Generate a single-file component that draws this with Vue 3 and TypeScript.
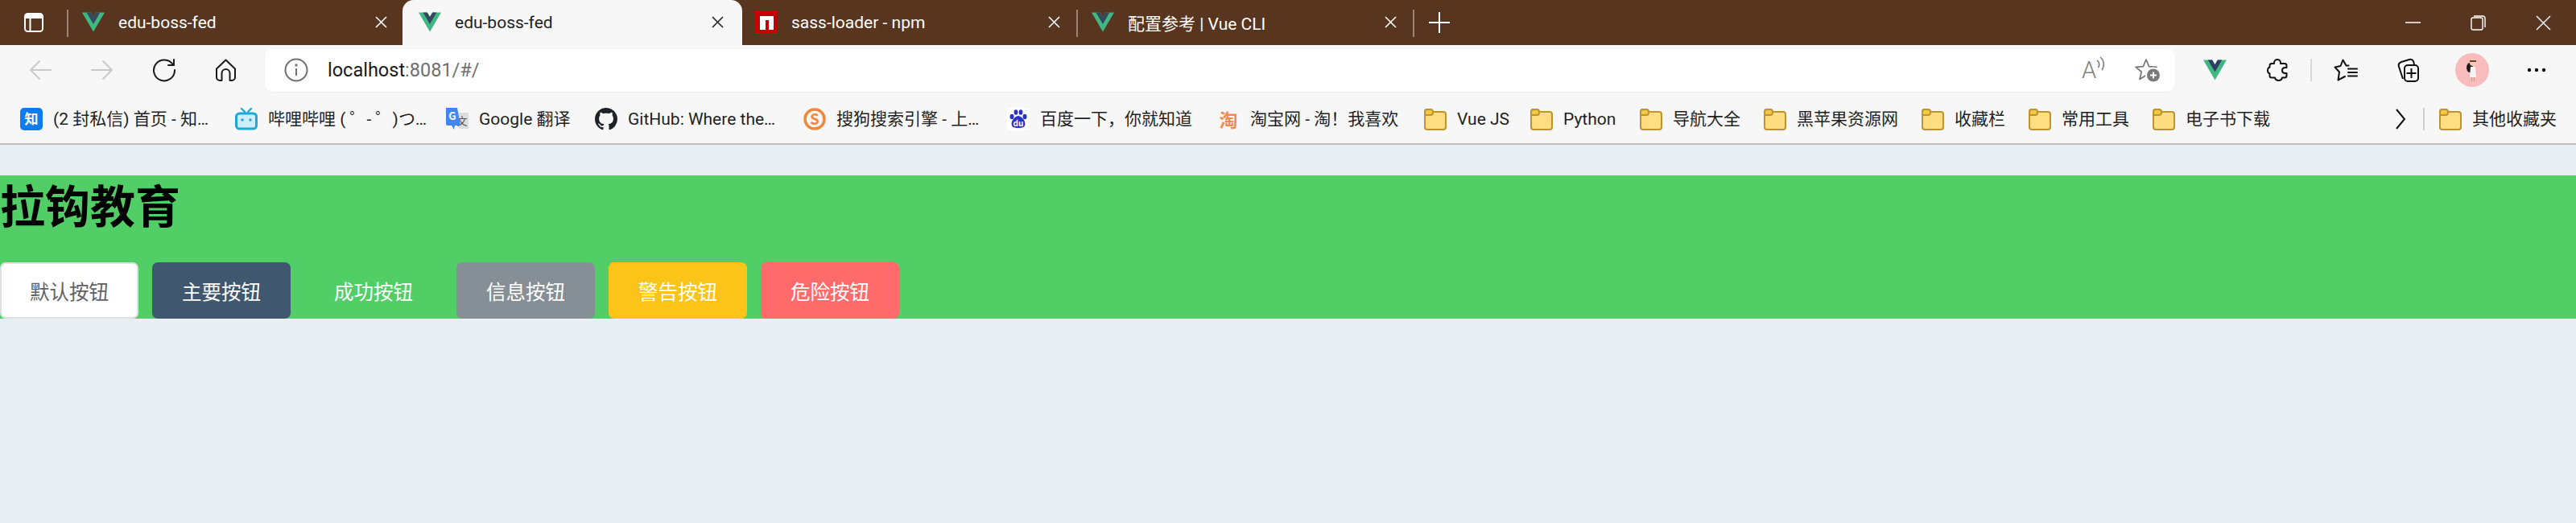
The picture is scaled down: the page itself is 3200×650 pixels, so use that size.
<script setup lang="ts">
interface Bookmark {
  title: string
  icon: string
  width: number
}

const bookmarks: Bookmark[] = [
  { title: '(2 封私信) 首页 - 知…', icon: 'zhihu', width: 267 },
  { title: '哔哩哔哩 ( ゜- ゜)つ…', icon: 'bili', width: 262 },
  { title: 'Google 翻译', icon: 'google', width: 185 },
  { title: 'GitHub: Where the…', icon: 'github', width: 259 },
  { title: '搜狗搜索引擎 - 上…', icon: 'sogou', width: 253 },
  { title: '百度一下，你就知道', icon: 'baidu', width: 261 },
  { title: '淘宝网 - 淘！我喜欢', icon: 'tao', width: 257 },
  { title: 'Vue JS', icon: 'folder', width: 132 },
  { title: 'Python', icon: 'folder', width: 136 },
  { title: '导航大全', icon: 'folder', width: 154 },
  { title: '黑苹果资源网', icon: 'folder', width: 196 },
  { title: '收藏栏', icon: 'folder', width: 133 },
  { title: '常用工具', icon: 'folder', width: 154 },
  { title: '电子书下载', icon: 'folder', width: 160 }
]

const buttons = [
  { label: '默认按钮', type: 'default' },
  { label: '主要按钮', type: 'primary' },
  { label: '成功按钮', type: 'success' },
  { label: '信息按钮', type: 'info' },
  { label: '警告按钮', type: 'warning' },
  { label: '危险按钮', type: 'danger' }
]

const tabs = [
  { title: 'edu-boss-fed', icon: 'vue', active: false, sep: true },
  { title: 'edu-boss-fed', icon: 'vue', active: true, sep: false },
  { title: 'sass-loader - npm', icon: 'npm', active: false, sep: false },
  { title: '配置参考 | Vue CLI', icon: 'vue', active: false, sep: true }
]
</script>

<template>
  <div class="browser">
    <header class="tabbar">
      <div class="side-btn">
        <svg width="24" height="24" viewBox="0 0 24 24">
          <rect x="1" y="1" width="22" height="22" rx="3.5" fill="none" stroke="#fff" stroke-width="2" />
          <path d="M1 7V4.5A3.5 3.5 0 0 1 4.500 1h15A3.500 3.500 0 0 1 23 4.500V7Z" fill="#fff" />
          <path d="M7.500 7v16" stroke="#fff" stroke-width="2" />
        </svg>
      </div>
      <div
        v-for="(tab, i) in tabs"
        :key="i"
        class="tab"
        :class="{ active: tab.active, sep: tab.sep }"
      >
        <svg v-if="tab.icon === 'vue'" class="tab-icon" width="28" height="25" viewBox="0 0 256 221">
          <path d="M204.800 0H256L128 220.800 0 0h97.920L128 51.200 157.440 0h47.360Z" fill="#41b883" />
          <path d="M50.560 0 128 133.120 204.800 0h-47.360L128 51.200 97.920 0H50.560Z" fill="#35495e" />
        </svg>
        <svg v-else class="tab-icon" width="28" height="28" viewBox="0 0 28 28">
          <rect width="28" height="28" fill="#c60000" />
          <path d="M6 6h17v17h-6V11h-4v12H6Z" fill="#fff" />
        </svg>
        <span class="tab-title">{{ tab.title }}</span>
        <svg class="tab-close" width="15" height="15" viewBox="0 0 15 15">
          <path d="M1 1l13 13M14 1 1 14" stroke="currentColor" stroke-width="1.600" />
        </svg>
      </div>
      <div class="new-tab">
        <svg width="26" height="26" viewBox="0 0 26 26">
          <path d="M13 0v26M0 13h26" stroke="#fff" stroke-width="2" />
        </svg>
      </div>
      <div class="win-controls">
        <div class="win-btn">
          <svg width="19" height="2" viewBox="0 0 19 2"><path d="M0 1h19" stroke="#fff" stroke-width="1.500" /></svg>
        </div>
        <div class="win-btn">
          <svg width="19" height="19" viewBox="0 0 19 19" fill="none" stroke="#fff" stroke-width="1.400">
            <rect x="1" y="3" width="14" height="15" rx="2" />
            <path d="M4 1h11a3 3 0 0 1 3 3v11" />
          </svg>
        </div>
        <div class="win-btn">
          <svg width="19" height="19" viewBox="0 0 19 19"><path d="M1 1l17 17M18 1 1 18" stroke="#fff" stroke-width="1.400" /></svg>
        </div>
      </div>
    </header>

    <div class="toolbar">
      <div class="tool-btn">
        <svg width="28" height="26" viewBox="0 0 28 26" fill="none" stroke="#c9c9c9" stroke-width="2" stroke-linecap="round" stroke-linejoin="round">
          <path d="M27 13H2M13 2 2 13l11 11" />
        </svg>
      </div>
      <div class="tool-btn">
        <svg width="28" height="26" viewBox="0 0 28 26" fill="none" stroke="#c9c9c9" stroke-width="2" stroke-linecap="round" stroke-linejoin="round">
          <path d="M1 13h25M15 2l11 11-11 11" />
        </svg>
      </div>
      <div class="tool-btn">
        <svg width="30" height="30" viewBox="0 0 30 30" fill="none" stroke="#1a1a1a" stroke-width="2" stroke-linecap="round" stroke-linejoin="round">
          <path d="M26 8.500A13 13 0 1 0 28 15" />
          <path d="M27 2v7h-7" />
        </svg>
      </div>
      <div class="tool-btn">
        <svg width="27" height="28" viewBox="0 0 27 28" fill="none" stroke="#1a1a1a" stroke-width="2" stroke-linejoin="round">
          <path d="M2 12.500 13.500 1.500 25 12.500V23a4 4 0 0 1-4 4h-2.500V18a5 5 0 0 0-10 0v9H6a4 4 0 0 1-4-4Z" />
        </svg>
      </div>

      <div class="address">
        <svg class="info-icon" width="30" height="30" viewBox="0 0 30 30" fill="none" stroke="#707070" stroke-width="2">
          <circle cx="15" cy="15" r="13.500" />
          <path d="M15 13v9" />
          <circle cx="15" cy="9" r=".7" />
        </svg>
        <span class="url"><span class="host">localhost</span>:8081/#/</span>
        <div class="addr-right">
          <div class="read-icon">
            <span class="read-a">A</span>
            <svg width="12" height="18" viewBox="0 0 12 18">
              <path d="M1 5c3 2 3.500 6 1.500 9M5 1c5 4 5.500 11 2 16" fill="none" stroke="#808080" stroke-width="1.600" />
            </svg>
          </div>
          <svg width="32" height="30" viewBox="0 0 32 30">
            <path d="M14 2l3.600 8.600 9.400.7-7.200 6 2.200 9.200-8-4.900-8 4.900 2.200-9.200L1 11.300l9.400-.7Z" fill="none" stroke="#7a7a7a" stroke-width="1.800" stroke-linejoin="round" />
            <circle cx="23" cy="21.500" r="10" fill="#fff" />
            <circle cx="23" cy="21.500" r="8" fill="#7a7a7a" />
            <path d="M23 17.500v8M19 21.500h8" stroke="#fff" stroke-width="2" />
          </svg>
        </div>
      </div>

      <div class="tool-btn first-ext">
        <svg width="29" height="26" viewBox="0 0 256 221">
          <path d="M204.800 0H256L128 220.800 0 0h97.920L128 51.200 157.440 0h47.360Z" fill="#41b883" />
          <path d="M50.560 0 128 133.120 204.800 0h-47.360L128 51.200 97.920 0H50.560Z" fill="#2f3f5c" />
        </svg>
      </div>
      <div class="tool-btn">
        <svg width="26" height="28" viewBox="0 0 26 28" fill="none" stroke="#111" stroke-width="2" stroke-linejoin="round">
          <path d="M9 5C9 2.500 11 1 13 1s4 1.500 4 4v1h5c1.500 0 2.500 1 2.500 2.500V11H23c-2.500 0-4 1.500-4 3.500s1.500 3.500 4 3.500h1.500v3c0 1.500-1 2.500-2.500 2.500h-3c-.5 2.300-2.500 3.500-4.500 3.500s-4-1.200-4.500-3.500H6c-1.500 0-2.500-1-2.500-2.500v-2.500C2 18 1 16.300 1 14.500S2 11 3.500 10.500v-2C3.500 7 4.500 6 6 6h3Z" />
        </svg>
      </div>
      <div class="tool-sep"></div>
      <div class="tool-btn">
        <svg width="30" height="28" viewBox="0 0 30 28" fill="none" stroke="#111" stroke-width="2" stroke-linejoin="round" stroke-linecap="round">
          <path d="M18.500 8.500H15.500L11.500 1.500 8.500 9 1.500 10.500 7 16.500 5.500 26.500 14 22" />
          <path d="M18 12.500h11M18 17h11M18 21.500h11" />
        </svg>
      </div>
      <div class="tool-btn">
        <svg width="28" height="30" viewBox="0 0 28 30" fill="none" stroke="#111" stroke-width="2" stroke-linejoin="round">
          <path d="M8 26 3 11C2 8 3 6 6 5l10-3c2-.5 4 .2 5 2l1 4" />
          <rect x="10" y="9" width="17" height="20" rx="4" />
          <path d="M18.500 13v12M12.500 19h12" />
        </svg>
      </div>
      <div class="tool-btn avatar-btn">
        <svg width="42" height="42" viewBox="0 0 42 42">
          <circle cx="21" cy="21" r="21" fill="#f8bcbc" />
          <ellipse cx="18" cy="18" rx="4" ry="6" fill="#1d1d1d" />
          <circle cx="22" cy="12" r="4" fill="#f1cdb8" />
          <path d="M18 9h8v2h-8Z" fill="#7a3a2a" />
          <path d="M19 17h6l1 13h-8Z" fill="#f4f4f4" />
          <path d="M20 30h1v5h-1ZM23 30h1v5h-1Z" fill="#b89a9a" />
        </svg>
      </div>
      <div class="tool-btn">
        <svg width="24" height="6" viewBox="0 0 24 6" fill="#111">
          <circle cx="3" cy="3" r="2.200" />
          <circle cx="12" cy="3" r="2.200" />
          <circle cx="21" cy="3" r="2.200" />
        </svg>
      </div>
    </div>

    <nav class="bookmarks">
      <a
        v-for="b in bookmarks"
        :key="b.title"
        class="bookmark"
        :style="{ width: b.width + 'px' }"
      >
        <svg v-if="b.icon === 'zhihu'" class="bm-icon" width="28" height="28" viewBox="0 0 28 28">
          <rect width="28" height="28" rx="5" fill="#0f7bf0" />
          <text x="14" y="20" text-anchor="middle" class="icon-text zhi">知</text>
        </svg>
        <svg v-else-if="b.icon === 'bili'" class="bm-icon" width="28" height="28" viewBox="0 0 28 28">
          <path d="M8 1l4 4M20 1l-4 4" stroke="#1aa9d8" stroke-width="2.400" stroke-linecap="round" />
          <rect x="1.500" y="7" width="25" height="19" rx="4" fill="#cfeef7" stroke="#1aa9d8" stroke-width="3" />
          <circle cx="9" cy="15" r="1.700" fill="#1aa9d8" />
          <circle cx="19" cy="15" r="1.700" fill="#1aa9d8" />
        </svg>
        <svg v-else-if="b.icon === 'google'" class="bm-icon" width="28" height="28" viewBox="0 0 28 28">
          <path d="M12 6h16v20H16Z" fill="#dddddd" />
          <text x="20" y="21" text-anchor="middle" class="icon-text wen">文</text>
          <path d="M0 0h14l4 22h-7l-1 5-3-5H2a2 2 0 0 1-2-2Z" fill="#4285f4" />
          <text x="8" y="15" text-anchor="middle" class="icon-text gee">G</text>
        </svg>
        <svg v-else-if="b.icon === 'github'" class="bm-icon" width="28" height="28" viewBox="0 0 16 16">
          <path fill="#1f2328" d="M8 0C3.580 0 0 3.580 0 8c0 3.540 2.290 6.530 5.470 7.590.4.070.55-.17.55-.38 0-.19-.01-.82-.01-1.490-2.010.37-2.530-.49-2.690-.94-.09-.23-.48-.94-.82-1.130-.28-.15-.68-.52-.01-.53.63-.01 1.080.58 1.230.82.72 1.210 1.870.87 2.330.66.07-.52.28-.87.51-1.070-1.780-.2-3.640-.89-3.640-3.950 0-.87.31-1.590.82-2.150-.08-.2-.36-1.020.08-2.120 0 0 .67-.21 2.200.82.64-.18 1.320-.27 2-.27.68 0 1.360.09 2 .27 1.530-1.040 2.200-.82 2.200-.82.44 1.100.16 1.920.08 2.120.51.56.82 1.270.82 2.150 0 3.070-1.870 3.750-3.650 3.950.29.25.54.73.54 1.480 0 1.070-.01 1.930-.01 2.200 0 .21.15.46.55.38A8.013 8.013 0 0 0 16 8c0-4.420-3.580-8-8-8z" />
        </svg>
        <svg v-else-if="b.icon === 'sogou'" class="bm-icon" width="28" height="28" viewBox="0 0 28 28">
          <circle cx="14" cy="14" r="12" fill="none" stroke="#ee8a3c" stroke-width="3.500" />
          <text x="14" y="20.500" text-anchor="middle" class="icon-text sou">S</text>
        </svg>
        <svg v-else-if="b.icon === 'baidu'" class="bm-icon" width="28" height="28" viewBox="0 0 28 28">
          <rect width="28" height="28" rx="2" fill="#fff" />
          <g fill="#2932c4">
            <ellipse cx="6" cy="11" rx="2.500" ry="3.200" />
            <ellipse cx="11" cy="5.500" rx="2.400" ry="3.200" />
            <ellipse cx="17" cy="5.500" rx="2.400" ry="3.200" />
            <ellipse cx="22" cy="11" rx="2.500" ry="3.200" />
            <path d="M14 10c4 0 10 7 8 12-1 3-5 3-8 3s-7 0-8-3c-2-5 4-12 8-12Z" />
          </g>
          <text x="14" y="23" text-anchor="middle" class="icon-text du">du</text>
        </svg>
        <span v-else-if="b.icon === 'tao'" class="bm-icon tao-icon">淘</span>
        <svg v-else class="bm-icon" width="28" height="28" viewBox="0 0 28 28">
          <path d="M1 5a3 3 0 0 1 3-3h4.500l3 3H24a3 3 0 0 1 3 3v16a3 3 0 0 1-3 3H4a3 3 0 0 1-3-3Z" fill="#ffdd80" stroke="#bd9530" stroke-width="2" />
          <path d="M1 9V5a3 3 0 0 1 3-3h4a3 3 0 0 1 3 3v1a3 3 0 0 1-3 3Z" fill="#f5c842" stroke="#bd9530" stroke-width="2" />
        </svg>
        <span class="bm-title">{{ b.title }}</span>
      </a>
      <div class="bm-right">
        <svg width="14" height="28" viewBox="0 0 14 28">
          <path d="M2 2l10 12L2 26" fill="none" stroke="#111" stroke-width="2" />
        </svg>
        <div class="bm-sep"></div>
        <a class="bookmark other">
          <svg class="bm-icon" width="28" height="28" viewBox="0 0 28 28">
            <path d="M1 5a3 3 0 0 1 3-3h4.500l3 3H24a3 3 0 0 1 3 3v16a3 3 0 0 1-3 3H4a3 3 0 0 1-3-3Z" fill="#ffdd80" stroke="#bd9530" stroke-width="2" />
            <path d="M1 9V5a3 3 0 0 1 3-3h4a3 3 0 0 1 3 3v1a3 3 0 0 1-3 3Z" fill="#f5c842" stroke="#bd9530" stroke-width="2" />
          </svg>
          <span class="bm-title">其他收藏夹</span>
        </a>
      </div>
    </nav>

    <main class="page">
      <section class="hero">
        <h1>拉钩教育</h1>
        <div class="btn-row">
          <button v-for="b in buttons" :key="b.type" class="btn" :class="b.type">{{ b.label }}</button>
        </div>
      </section>
    </main>
  </div>
</template>

<style scoped>
.browser {
  display: flex;
  flex-direction: column;
  height: 650px;
  overflow: hidden;
  font-family: Roboto, "Noto Sans CJK SC", sans-serif;
}

.tabbar {
  display: flex;
  align-items: stretch;
  height: 56px;
  background: #57351f;
  color: #fff;
}

.side-btn {
  display: flex;
  align-items: center;
  width: 83px;
  padding-left: 30px;
  box-sizing: border-box;
}

.tab {
  position: relative;
  display: flex;
  align-items: center;
  width: 418px;
  flex: none;
  padding: 0 20px 1px 19px;
  box-sizing: border-box;
  font-size: 21px;
}

.tab.sep::before {
  content: "";
  position: absolute;
  left: 0;
  top: 12px;
  bottom: 10px;
  width: 2px;
  background: #9c8374;
}

.tab.active {
  background: #f7f7f7;
  color: #222;
  border-radius: 14px 14px 0 0;
  width: 422px;
  margin: 0 -3px 0 -1px;
  padding-left: 20px;
  padding-right: 23px;
  z-index: 1;
}

.tab-icon {
  flex: none;
}

.tab-title {
  flex: 1;
  margin-left: 17px;
  white-space: nowrap;
}

.tab-close {
  flex: none;
}

.new-tab {
  position: relative;
  display: flex;
  align-items: center;
  justify-content: center;
  width: 62px;
  border-left: 2px solid transparent;
}

.new-tab::before {
  content: "";
  position: absolute;
  left: -2px;
  top: 12px;
  bottom: 10px;
  width: 2px;
  background: #9c8374;
}

.win-controls {
  display: flex;
  margin-left: auto;
}

.win-btn {
  display: flex;
  align-items: center;
  justify-content: center;
  width: 81px;
}

.toolbar {
  display: flex;
  align-items: center;
  height: 62px;
  padding: 0 11px;
  background: #f7f7f7;
  box-sizing: border-box;
}

.tool-btn {
  display: flex;
  align-items: center;
  justify-content: center;
  width: 77px;
  height: 54px;
  flex: none;
}

.first-ext {
  margin-left: 11px;
}

.avatar-btn {
  margin-left: 3px;
  margin-right: 3px;
}

.tool-sep {
  width: 2px;
  height: 28px;
  margin: 0 3px;
  flex: none;
  background: #d8d8d8;
}

.address {
  display: flex;
  align-items: center;
  flex: 1;
  height: 53px;
  margin-left: 10px;
  padding: 0 18px 0 24px;
  background: #fff;
  border-radius: 9px;
  box-shadow: 0 1px 2px rgba(0, 0, 0, 0.06);
}

.info-icon {
  flex: none;
}

.url {
  margin-left: 24px;
  font-size: 23.500px;
  color: #6f6f6f;
}

.host {
  color: #1a1a1a;
}

.addr-right {
  display: flex;
  align-items: center;
  gap: 34px;
  margin-left: auto;
}

.read-icon {
  display: flex;
  align-items: flex-start;
  width: 32px;
  height: 34px;
}

.read-a {
  font-size: 29px;
  font-weight: 300;
  line-height: 34px;
  color: #808080;
}

.bookmarks {
  display: flex;
  align-items: center;
  height: 62px;
  padding: 0 0 1px 25px;
  background: #f7f7f7;
  border-bottom: 2px solid #bdbdbd;
  box-sizing: border-box;
}

.bookmark {
  display: flex;
  align-items: center;
  flex: none;
  gap: 13px;
  white-space: nowrap;
  color: #1f1f1f;
}

.bm-icon {
  flex: none;
}

.tao-icon {
  width: 28px;
  font-family: "Noto Sans CJK SC", sans-serif;
  font-size: 23px;
  font-weight: 700;
  line-height: 28px;
  text-align: center;
  color: #f08a50;
}

.bm-title {
  font-size: 21px;
  line-height: 28px;
}

.bm-right {
  display: flex;
  align-items: center;
  margin-left: auto;
  padding-right: 24px;
}

.bm-sep {
  width: 2px;
  height: 28px;
  margin: 0 18px 0 21px;
  background: #d0d0d0;
}

.icon-text {
  font-family: "Noto Sans CJK SC", sans-serif;
}

.zhi {
  font-size: 17px;
  font-weight: 700;
  fill: #fff;
}

.wen {
  font-size: 13px;
  fill: #555;
}

.gee {
  font-size: 13px;
  font-weight: 700;
  fill: #fff;
}

.sou {
  font-size: 19px;
  font-weight: 700;
  fill: #ee8a3c;
}

.du {
  font-size: 10px;
  font-weight: 700;
  fill: #fff;
}

.page {
  flex: 1;
  padding-top: 38px;
  background: #e9eef3;
}

.hero {
  height: 178px;
  background: #51cf66;
}

h1 {
  margin: 0 0 38px;
  font-family: "Noto Sans CJK SC", sans-serif;
  font-size: 56px;
  font-weight: 700;
  line-height: 70px;
  color: #000;
}

.btn-row {
  display: flex;
  gap: 17px;
}

.btn {
  width: 172px;
  height: 70px;
  padding: 0;
  border: 2px solid transparent;
  border-radius: 7px;
  font-family: "Noto Sans CJK SC", sans-serif;
  font-size: 24.500px;
  color: #fff;
}

.btn.default {
  background: #fff;
  border-color: #dcdfe6;
  color: #606266;
}

.btn.primary {
  background: #40586f;
}

.btn.success {
  background: #51cf66;
}

.btn.info {
  background: #868e96;
}

.btn.warning {
  background: #fcc419;
}

.btn.danger {
  background: #ff6b6b;
}
</style>

<style>
html,
body {
  margin: 0;
  background: #e9eef3;
}
</style>
